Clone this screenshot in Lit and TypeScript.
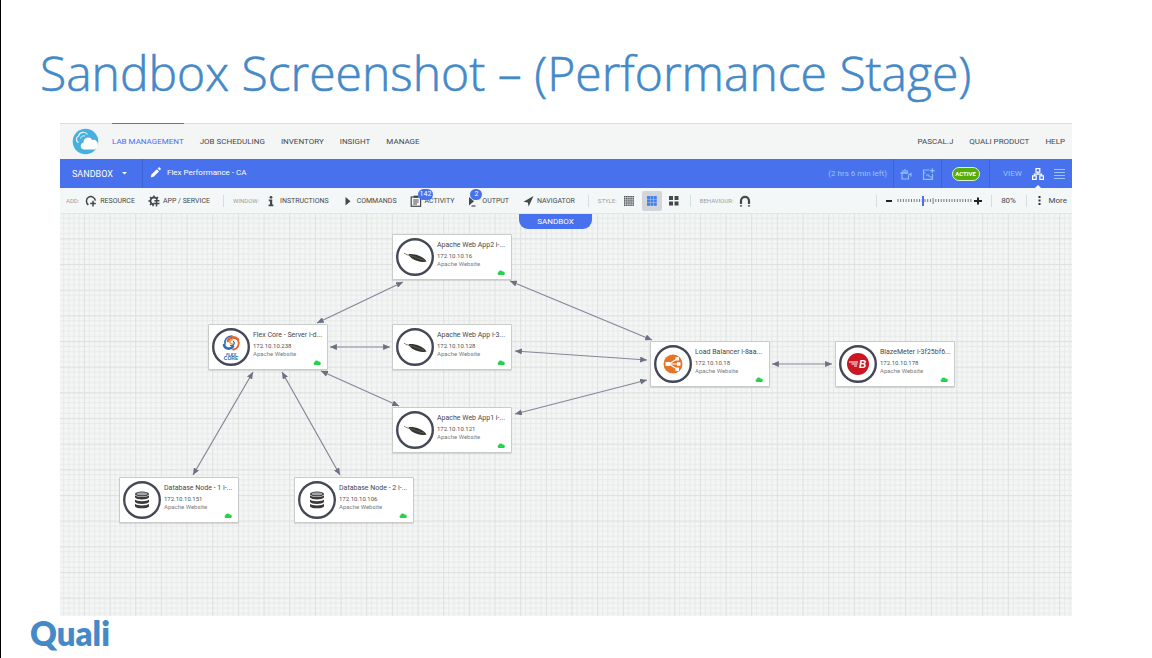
import { LitElement, html, svg, css } from "lit";
import { customElement, property, state } from "lit/decorators.js";
import { classMap } from "lit/directives/class-map.js";
import { styleMap } from "lit/directives/style-map.js";

type Kind = "flex" | "apache" | "database" | "balancer" | "blaze";

interface SandboxNode {
  kind: Kind;
  name: string;
  ip: string;
  x: number;
  y: number;
}

const NODES: SandboxNode[] = [
  { kind: "apache", name: "Apache Web App2 i-...", ip: "172.10.10.16", x: 332, y: 20 },
  { kind: "flex", name: "Flex Core - Server i-d...", ip: "172.10.10.238", x: 148, y: 110 },
  { kind: "apache", name: "Apache Web App i-3...", ip: "172.10.10.128", x: 332, y: 110 },
  { kind: "apache", name: "Apache Web App1 i-...", ip: "172.10.10.121", x: 332, y: 193 },
  { kind: "balancer", name: "Load Balancer i-8aa...", ip: "172.10.10.18", x: 590, y: 127 },
  { kind: "blaze", name: "BlazeMeter i-3f25bf6...", ip: "172.10.10.178", x: 775, y: 127 },
  { kind: "database", name: "Database Node - 1 i-...", ip: "172.10.10.151", x: 59, y: 263 },
  { kind: "database", name: "Database Node - 2 i-...", ip: "172.10.10.106", x: 234, y: 263 },
];

// Connector end points on the canvas: x1, y1, x2, y2
const LINKS = [
  [257, 109, 343, 68],
  [270, 133, 330, 133],
  [261, 157, 339, 192],
  [193, 158, 133, 261],
  [222, 158, 280, 261],
  [450, 67, 592, 126],
  [455, 137, 587, 146],
  [455, 200, 587, 166],
  [712, 150, 772, 150],
];

const ICONS = {
  resource: svg`<path d="M3.400 9.800A4.500 4.500 0 1 1 10.400 5.600" fill="none" stroke="currentColor" stroke-width="1.500"/><path d="M8 5.800v5.600M5.200 8.600h5.600" stroke="currentColor" stroke-width="1.500"/>`,
  service: svg`<path d="M6 2.400a3.400 3.400 0 1 0 0 7M6 2.400a3.400 3.400 0 0 1 3.200 2.400" fill="none" stroke="currentColor" stroke-width="1.800"/><path d="M6 .6v2M2 2l1.400 1.400M.4 6h2M2 10l1.400-1.400M10 2L8.600 3.400M11.400 5.800h-5M5 11.200V9" stroke="currentColor" stroke-width="1.500"/><path d="M8.500 5.500v6M5.500 8.600h6" stroke="currentColor" stroke-width="1.500"/>`,
  info: svg`<circle cx="6" cy="2.300" r="1.400" fill="currentColor"/><path d="M3.800 4.600h3.400v5h1.200V11.200H3.600V9.600H5V6.200H3.800z" fill="currentColor"/>`,
  play: svg`<path d="M3.500 2v8.600L8.500 6.300z" fill="currentColor"/>`,
  activity: svg`<rect x="1.200" y="2" width="9.400" height="9.300" fill="none" stroke="currentColor" stroke-width="1.200"/><path d="M3.700.6h4.400v2.200H3.700z" fill="currentColor"/><path d="M3.200 5h5.400M3.200 7h5.400M3.200 9h3.800" stroke="currentColor" stroke-width="1"/>`,
  output: svg`<path d="M2 2v8.400l5-4.200z" fill="currentColor"/><path d="M4.500 11h4" stroke="currentColor" stroke-width="1.200"/>`,
  navigator: svg`<path d="M11.500 1L1.500 6.700l4.300.8.900 4z" fill="currentColor"/>`,
  magnet: svg`<path d="M2 9V5.800a4 4 0 0 1 8 0V9" fill="none" stroke="currentColor" stroke-width="2.200"/><path d="M.9 10.900h2.200M8.900 10.900h2.200" stroke="currentColor" stroke-width="1.100"/>`,
};

const icon = (name: keyof typeof ICONS) =>
  html`<svg class="ico" width="12" height="12" viewBox="0 0 12 12" aria-hidden="true">${ICONS[name]}</svg>`;

const EMBLEMS: Record<Kind, unknown> = {
  apache: svg`
    <path d="M8 15.400l1.400.3M9.600 16.200l3.400 1.200" stroke="#777" stroke-width=".9"/>
    <path d="M12.600 16.200c5-.9 14.600 1.800 18 7.400-2 .8-6 .3-9-.6-4-1.200-8-3.400-9-6.800z" fill="#33332f"/>
    <path d="M14 17.300c4 1.500 9 3.200 14 5" stroke="#77776a" stroke-width=".6" fill="none"/>`,
  database: svg`
    <g fill="#3a3a3c">
      <ellipse cx="19" cy="13" rx="7" ry="2.600"/>
      <path d="M12 14.300c1.500 2.300 12.500 2.300 14 0v2.200c-1.500 2.600-12.500 2.600-14 0z"/>
      <path d="M12 18.400c1.500 2.300 12.500 2.300 14 0v2.600c-1.500 2.600-12.500 2.600-14 0z"/>
      <path d="M12 22.800c1.500 2.300 12.500 2.300 14 0v2.600c-1.500 2.600-12.500 2.600-14 0z"/>
    </g>
    <ellipse cx="19" cy="12.800" rx="5.400" ry="1.500" fill="#a5a5a7"/>`,
  balancer: svg`
    <circle cx="19" cy="19" r="9.500" fill="#e77325"/>
    <g stroke="#fff" stroke-width="1.200" fill="none"><path d="M14 19h10M15 19l7.500-4.800M15 19l7.500 4.800"/></g>
    <g fill="#fff"><path d="M11.500 17h4.500v4h-4.500z"/><path d="M21.500 12h3.500v3.500h-3.500zM23 17.300h3.500v3.500H23zM21.500 22.500h3.500v3.500h-3.500z"/></g>`,
  blaze: svg`
    <circle cx="19" cy="19" r="11" fill="#ca1722"/>
    <path d="M10 17h9M12.500 19h6M15 21h3" stroke="#fff" stroke-width="1.100"/>
    <text x="20" y="22.600" class="mark blazemark">B</text>`,
  flex: svg`
    <g fill="none" stroke-linecap="round">
      <path d="M13 16c-1-4 2-8 7-8" stroke="#2d6db8" stroke-width="1.600"/>
      <path d="M16 13c1-4 7-5 10-1.500" stroke="#e5622d" stroke-width="2.600"/>
      <path d="M26 12c2 4 0 9-5 9.500" stroke="#e5622d" stroke-width="1.800"/>
      <path d="M12 17c1 4 6 5 9 1.500" stroke="#2d6db8" stroke-width="2.600"/>
      <path d="M20.500 11.500c-4 1-3 5 .3 4.500" stroke="#f0a23c" stroke-width="1.500"/>
      <path d="M21.500 13.500c2 2 0 4.500-3 4" stroke="#2d6db8" stroke-width="1.200"/>
    </g>
    <text x="19" y="27.500" class="mark flexmark">FLEX</text>
    <text x="19" y="31.500" class="mark coremark">CORE</text>`,
};

@customElement("sandbox-node")
class SandboxNodeCard extends LitElement {
  @property({ attribute: false }) node!: SandboxNode;

  static styles = css`
    :host { display: block; }
    .card {
      box-sizing: border-box; display: grid; grid-template-columns: 38px 1fr; column-gap: 3px;
      width: 120px; height: 46px; padding: 3px 2px 3px 3px; background: #fff;
      border: 1px solid #c9cbcb; border-radius: 1px; box-shadow: 0 1px 1px rgba(0, 0, 0, 0.12);
      position: relative;
    }
    .emblem { display: block; }
    .text { min-width: 0; padding-top: 2px; color: #45474d; white-space: nowrap; }
    .name { font-size: 7px; line-height: 11px; margin: 0; font-weight: 400; }
    .ip { font-size: 6px; line-height: 10px; margin: 0; color: #505257; }
    .kind { font-size: 6px; line-height: 6px; margin: 0; color: #7b7d80; }
    .cloud { position: absolute; right: 6px; bottom: 4px; }
    .mark { font-family: "Liberation Sans", Arial, sans-serif; font-weight: 700; }
    .blazemark { font-size: 10px; font-style: italic; fill: #fff; }
    .flexmark, .coremark { text-anchor: middle; fill: #1f66ad; }
    .flexmark { font-size: 4px; font-style: italic; }
    .coremark { font-size: 5px; }
  `;

  render() {
    const n = this.node;
    return html`
      <article class="card">
        <svg class="emblem" width="38" height="38" viewBox="0 0 38 38" aria-hidden="true">
          <circle cx="19" cy="19" r="17.800" fill="#fff" stroke="#454856" stroke-width="2.400"/>
          ${EMBLEMS[n.kind]}
        </svg>
        <div class="text">
          <h3 class="name">${n.name}</h3>
          <p class="ip">${n.ip}</p>
          <p class="kind">Apache Website</p>
        </div>
        <svg class="cloud" width="8" height="5" viewBox="0 0 8 5" aria-hidden="true">
          <path d="M1.500 5a1.500 1.500 0 0 1 0-2.800A2.300 2.300 0 0 1 5.600 1.400 2 2 0 0 1 7 5z" fill="#25d34d"/>
        </svg>
      </article>`;
  }
}

@customElement("app-root")
class AppRoot extends LitElement {
  @state() private layout = "medium";

  static styles = css`
    :host { display: block; font-family: Roboto, "Liberation Sans", sans-serif; }
    * { box-sizing: border-box; }
    a { color: inherit; text-decoration: none; }
    button { font: inherit; color: inherit; background: none; border: 0; padding: 0; margin: 0; cursor: pointer; }
    svg { display: block; flex: none; }
    .slide {
      display: flex; flex-direction: column; min-height: 100vh; background: #fff;
      border-left: 1px solid #000; overflow: hidden;
    }
    .title {
      margin: 0; padding: 41px 40px 18px 39px; font-family: "Open Sans", "Noto Sans", sans-serif;
      font-weight: 300; font-size: 48px; line-height: 64px; color: #4489c8; white-space: nowrap;
      -webkit-text-stroke: 0.6px #4489c8;
    }
    .app { flex: 1; display: flex; flex-direction: column; margin: 0 80px 0 59px; background: #f4f6f6; }

    .topbar {
      display: flex; align-items: center; height: 36px; padding: 0 7px 0 12px;
      border-top: 1px solid #dadcdc; font-size: 8px; color: #45474b;
    }
    .brand { margin-right: 13px; }
    .nav { display: flex; gap: 16px; height: 36px; margin-top: -1px; }
    .nav-link { display: flex; align-items: center; border-top: 1px solid transparent; }
    .nav-link.current { color: #4771ed; border-color: #4771ed; }
    .user { margin-left: auto; }

    .bluebar { display: flex; height: 29px; background: #4771ed; color: #fff; font-size: 8px; }
    .cell { display: flex; align-items: center; border-right: 1px solid #3c62d3; }
    .menu { width: 83px; padding-left: 12px; gap: 9px; font-size: 9px; }
    .name { flex: 1; padding: 0 0 2px 7px; gap: 6px; border: 0; }
    .left { padding-right: 6px; color: #9cc2fa; }
    .tools { width: 48px; justify-content: center; gap: 10px; color: #92bdf8; }
    .status { width: 48px; justify-content: center; }
    .pill {
      border: 1px solid #dff0d0; border-radius: 8px; background: #55ae06; font-size: 6px; font-weight: 700;
      line-height: 12px; width: 28px; text-align: center;
    }
    .view { width: 82px; padding-left: 13px; gap: 10px; border: 0; color: #9cc2fa; }
    .chart { position: relative; color: #fff; }
    .pointer { position: absolute; left: 3px; top: 17px; }

    .toolbar {
      display: flex; align-items: center; height: 26px; padding: 0 5px 0 6px; gap: 9px;
      border-bottom: 1px solid #e4e7e8; background: #f4f7f8; font-size: 7px; color: #45474b;
    }
    .group { display: flex; align-items: center; gap: 13px; }
    .label { font-size: 6px; color: #9b9da0; }
    .add-label, .window-label { margin-right: -7px; }
    .tool { display: flex; align-items: center; gap: 3px; position: relative; white-space: nowrap; }
    .rule { width: 1px; height: 12px; background: #d9dcde; }
    .badge {
      position: absolute; left: 8px; top: -6px; min-width: 12px; height: 11px; padding: 0 2px; border-radius: 6px;
      background: #4771ed; color: #fff; font-size: 7px; line-height: 11px; text-align: center;
    }
    .badge.narrow { left: 3px; }
    .layouts { display: flex; align-items: center; gap: 2px; margin-right: -4px; }
    .layout { display: grid; place-items: center; width: 21px; height: 20px; border-radius: 2px; }
    .layout.on { background: #d3d6d8; color: #4680ea; width: 20px; }
    .behaviour { gap: 6px; }
    .zoom { margin-left: auto; display: flex; align-items: center; gap: 2px; }
    .slider { display: grid; width: 75px; }
    .slider > * { grid-area: 1 / 1; }
    .range { appearance: none; -webkit-appearance: none; width: 75px; height: 10px; margin: 0; background: transparent; }
    .range::-webkit-slider-thumb { -webkit-appearance: none; width: 2px; height: 10px; background: #4771ed; }
    .percent, .more { font-size: 8px; }
    .percent { width: 16px; text-align: center; }
    .more { display: flex; align-items: center; gap: 8px; padding-left: 2px; }

    .canvas { position: relative; flex: 1; min-height: 350px; overflow: hidden; background: #f4f6f5; }
    .sheet { position: absolute; inset: 0; width: 100%; height: 100%; }
    .tab {
      position: absolute; top: 0; left: calc(50% - 47px); width: 73px; height: 15px; border-radius: 0 0 9px 9px;
      background: #4771ed; color: #fff; font-size: 8px; line-height: 15px; text-align: center;
    }
    .spot { position: absolute; }

    .footer { display: flex; height: 42px; padding: 0 29px; }
    .quali { margin: 0; font-family: Lato, sans-serif; font-weight: 800; font-size: 33px; line-height: 34px; color: #4489c8; }
  `;

  private tool(name: keyof typeof ICONS, text: string, badge = "") {
    return html`<button class="tool" type="button">${icon(name)}<span>${text}</span>
      ${badge ? html`<span class=${classMap({ badge: true, narrow: badge.length < 2 })}>${badge}</span>` : ""}</button>`;
  }

  private cells(n: number, size: number, step: number) {
    const out = [];
    for (let r = 0; r < n; r++)
      for (let c = 0; c < n; c++)
        out.push(svg`<rect x=${c * step} y=${r * step} width=${size} height=${size} fill="currentColor"/>`);
    return html`<svg width="10" height="10" viewBox="0 0 10 10" aria-hidden="true">${out}</svg>`;
  }

  private layoutButton(id: string, label: string, n: number, size: number, step: number) {
    return html`<button type="button" aria-label=${label} aria-pressed=${this.layout === id}
      class=${classMap({ layout: true, on: this.layout === id })}
      @click=${() => (this.layout = id)}>${this.cells(n, size, step)}</button>`;
  }

  private ticks() {
    return Array.from({ length: 28 }, (_, i) => {
      const x = 1 + i * 2.7;
      const tall = i === 13;
      return svg`<path d=${`M${x} ${tall ? 2 : 3}v${tall ? 6 : 3}`} stroke="#777" stroke-width="1"/>`;
    });
  }

  render() {
    return html`
      <main class="slide">
        <h1 class="title">Sandbox Screenshot – (Performance Stage)</h1>
        <section class="app">
          <header class="topbar">
            <a class="brand" href="#" aria-label="Home">
              <svg width="27" height="27" viewBox="0 0 27 27">
                <circle cx="13.500" cy="13.500" r="12.800" fill="#47b0df"/>
                <path d="M6.500 14.500A3.600 3.600 0 0 1 6.500 8 5 5 0 0 1 15.500 6.500" fill="none" stroke="#e8f6fc" stroke-width="1.200"/>
                <path d="M8.500 10.500a3.500 3.500 0 0 1 4.500-2.500" fill="none" stroke="#e8f6fc" stroke-width="1"/>
                <path d="M12 21.500a3.600 3.600 0 0 1-.4-7.100 4.600 4.600 0 0 1 8.600-2.400 4.300 4.300 0 0 1 5.600 4.500q.3 4-3.300 5z" fill="#fff"/>
              </svg>
            </a>
            <nav class="nav">
              <a class="nav-link current" href="#">LAB MANAGEMENT</a>
              <a class="nav-link" href="#">JOB SCHEDULING</a>
              <a class="nav-link" href="#">INVENTORY</a>
              <a class="nav-link" href="#">INSIGHT</a>
              <a class="nav-link" href="#">MANAGE</a>
            </nav>
            <nav class="nav user">
              <a class="nav-link" href="#">PASCAL.J</a>
              <a class="nav-link" href="#">QUALI PRODUCT</a>
              <a class="nav-link" href="#">HELP</a>
            </nav>
          </header>

          <div class="bluebar">
            <button class="cell menu" type="button">SANDBOX
              <svg width="5" height="3" viewBox="0 0 5 3"><path d="M0 0h5L2.500 2.600z" fill="#fff"/></svg>
            </button>
            <div class="cell name">
              <svg width="11" height="11" viewBox="0 0 11 11"><path d="M.8 10.300l.6-2.800 5.400-5.300 2.200 2.200-5.400 5.300zM7.600 1.500L8.600.6q.6-.5 1.200 0l.8.8q.5.600 0 1.200l-.9 1z" fill="#fff"/></svg>
              <span>Flex Performance - CA</span>
            </div>
            <div class="cell left">(2 hrs 6 min left)</div>
            <div class="cell tools">
              <button type="button" aria-label="Reserve">
                <svg width="12" height="12" viewBox="0 0 12 12" fill="none" stroke="currentColor"><path d="M1 5h7.500M2 5.500v5.500h6.500V7l2.500-1.500v3" stroke-width="1.200"/><path d="M3 6V2M5 6V1M7 6V2M1.200 6V4" stroke-width="1.300"/></svg>
              </button>
              <button type="button" aria-label="Save">
                <svg width="13" height="12" viewBox="0 0 13 12" fill="none" stroke="currentColor"><path d="M7.500 2h-6v9.300h9V6" stroke-width="1.200"/><path d="M10.300.3v4.800M8 2.700h4.700" stroke-width="1.200"/><path d="M1.500 5h2M4 7h3v2M8 9h2.500" stroke-width="1"/></svg>
              </button>
            </div>
            <div class="cell status"><span class="pill">ACTIVE</span></div>
            <div class="cell view">
              <span>VIEW</span>
              <button class="chart" type="button" aria-label="Diagram view">
                <svg width="12" height="12" viewBox="0 0 12 12" fill="none" stroke="currentColor" stroke-width="1.200"><path d="M4 .6h3.800v3.600H4zM.6 7.800h3.600v3.600H.6zM7.800 7.800h3.600v3.600H7.800zM5.900 4.200v2M2.400 7.800V6.100h7.200v1.700"/></svg>
                <svg class="pointer" width="6" height="3" viewBox="0 0 6 3"><path d="M0 3h6L3 0z" fill="#fff"/></svg>
              </button>
              <button type="button" aria-label="List view">
                <svg width="11" height="11" viewBox="0 0 11 11" stroke="currentColor" stroke-width="1"><path d="M0 1.500h11M0 4.500h11M0 7.500h11M0 10.500h11"/></svg>
              </button>
            </div>
          </div>

          <div class="toolbar">
            <div class="group">
              <span class="label add-label">ADD:</span>
              ${this.tool("resource", "RESOURCE")}
              ${this.tool("service", "APP / SERVICE")}
              <span class="rule"></span>
            </div>
            <div class="group">
              <span class="label window-label">WINDOW:</span>
              ${this.tool("info", "INSTRUCTIONS")}
              ${this.tool("play", "COMMANDS")}
              ${this.tool("activity", "ACTIVITY", "142")}
              ${this.tool("output", "OUTPUT", "2")}
              ${this.tool("navigator", "NAVIGATOR")}
              <span class="rule"></span>
            </div>
            <div class="layouts">
              <span class="label">STYLE:</span>
              ${this.layoutButton("small", "Small tiles", 5, 1.5, 2.1)}
              ${this.layoutButton("medium", "Medium tiles", 3, 3, 3.4)}
              ${this.layoutButton("large", "Large tiles", 2, 4, 5.5)}
            </div>
            <span class="rule"></span>
            <div class="group behaviour">
              <span class="label">BEHAVIOUR:</span>
              <button class="tool" type="button" aria-label="Snap">${icon("magnet")}</button>
            </div>
            <div class="zoom">
              <span class="rule"></span>
              <button class="tool" type="button" aria-label="Zoom out"><svg width="16" height="8" viewBox="0 0 16 8"><path d="M7 4h6" stroke="#222" stroke-width="2"/></svg></button>
              <div class="slider">
                <svg width="75" height="10" viewBox="0 0 75 10">${this.ticks()}</svg>
                <input class="range" type="range" min="0" max="100" value="35" aria-label="Zoom">
              </div>
              <button class="tool" type="button" aria-label="Zoom in"><svg width="8" height="8" viewBox="0 0 8 8"><path d="M0 4h8M4 .5v7" stroke="#222" stroke-width="2"/></svg></button>
            </div>
            <span class="rule"></span>
            <span class="percent">80%</span>
            <span class="rule"></span>
            <button class="more" type="button">
              <svg width="3" height="9" viewBox="0 0 3 9" fill="#333"><path d="M.5 0h2v2h-2zM.5 3.500h2v2h-2zM.5 7h2v2h-2z"/></svg>
              <span>More</span>
            </button>
          </div>

          <div class="canvas">
            <svg class="sheet" aria-hidden="true">
              <defs>
                <pattern id="grid" width="32" height="32" patternUnits="userSpaceOnUse" patternTransform="translate(-1.800 -1.400) scale(.802)">
                  <path d="M6.900 0v32M13.300 0v32M19.700 0v32M26.100 0v32M0 6.900h32M0 13.300h32M0 19.700h32M0 26.100h32" stroke="#e7eae9" stroke-width="1.300"/>
                  <path d="M.7 0v32M0 .7h32" stroke="#dee1e0" stroke-width="1.400"/>
                </pattern>
                <marker id="tip" viewBox="0 0 8 7" refX="8" refY="3.500" markerWidth="7" markerHeight="6" markerUnits="userSpaceOnUse" orient="auto-start-reverse">
                  <path d="M0 0l8 3.500L0 7z" fill="#6c7083"/>
                </marker>
              </defs>
              <rect width="100%" height="100%" fill="url(#grid)"/>
              ${LINKS.map(([x1, y1, x2, y2]) => svg`<line x1=${x1} y1=${y1} x2=${x2} y2=${y2} stroke="#85879a" stroke-width="1.200" marker-start="url(#tip)" marker-end="url(#tip)"/>`)}
            </svg>
            <button class="tab" type="button">SANDBOX</button>
            ${NODES.map((n) => html`<sandbox-node class="spot" style=${styleMap({ left: `${n.x}px`, top: `${n.y}px` })} .node=${n}></sandbox-node>`)}
          </div>
        </section>
        <footer class="footer">
          <p class="quali">Quali</p>
        </footer>
      </main>`;
  }
}
